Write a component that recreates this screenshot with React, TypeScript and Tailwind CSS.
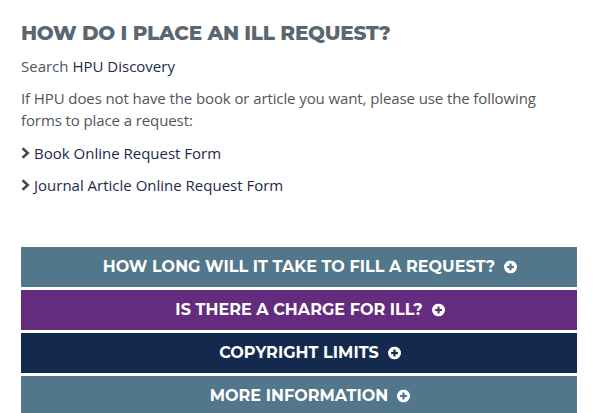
import React from "react";

const Plus = ({ color }: { color: string }) => (
  <svg width="13" height="13" viewBox="0 0 13 13" className="absolute left-full top-1/2 -translate-y-1/2 ml-[9px]">
    <circle cx="6.5" cy="6.5" r="6.5" fill="#ffffff" />
    <rect x="3.1" y="5.4" width="6.8" height="2.2" fill={color} />
    <rect x="5.4" y="3.1" width="2.2" height="6.8" fill={color} />
  </svg>
);

const Chevron = () => (
  <svg width="9" height="12" viewBox="0 0 9 12" className="shrink-0">
    <path d="M1.5 1.2 L6.8 6 L1.5 10.8" fill="none" stroke="#3f4852" strokeWidth="2.5" />
  </svg>
);

const bars = [
  { label: "HOW LONG WILL IT TAKE TO FILL A REQUEST?", cls: "bg-[#52768a]", color: "#52768a" },
  { label: "IS THERE A CHARGE FOR ILL?", cls: "bg-[#652b7f]", color: "#652b7f" },
  { label: "COPYRIGHT LIMITS", cls: "bg-[#13294d]", color: "#13294d" },
  { label: "MORE INFORMATION", cls: "bg-[#52768a]", color: "#52768a" },
];

export default function App() {
  return (
    <div className="w-[601px] h-[413px] overflow-hidden bg-white px-[21px] pt-[21px] font-['Open_Sans',sans-serif]">
      <h2 className="font-['Montserrat','Inter',sans-serif] font-extrabold text-[20px] leading-[24px] text-[#5a6670] tracking-[-0.25px]">
        HOW DO I PLACE AN ILL REQUEST?
      </h2>
      <p className="mt-[10px] text-[15px] leading-[22px] text-[#50565c]">
        Search <span className="text-[#1b2a4a]">HPU Discovery</span>
      </p>
      <p className="mt-[10px] text-[15px] leading-[22px] text-[#50565c] w-[530px] tracking-[-0.1px]">
        If HPU does not have the book or article you want, please use the following forms to place a request:
      </p>
      <div className="mt-[11px] flex items-center gap-[4px] text-[15px] leading-[22px] text-[#1b2a4a]">
        <Chevron />
        <span>Book Online Request Form</span>
      </div>
      <div className="mt-[10px] flex items-center gap-[4px] text-[15px] leading-[22px] text-[#1b2a4a]">
        <Chevron />
        <span>Journal Article Online Request Form</span>
      </div>
      <div className="mt-[51px] flex flex-col gap-[3px] w-[556px]">
        {bars.map((b) => (
          <div key={b.label} className={`h-[40px] flex items-center justify-center ${b.cls}`}>
            <span className="relative text-white font-['Montserrat','Inter',sans-serif] font-bold text-[16px] tracking-[0.05px]">
              {b.label}
              <Plus color={b.color} />
            </span>
          </div>
        ))}
      </div>
    </div>
  );
}
